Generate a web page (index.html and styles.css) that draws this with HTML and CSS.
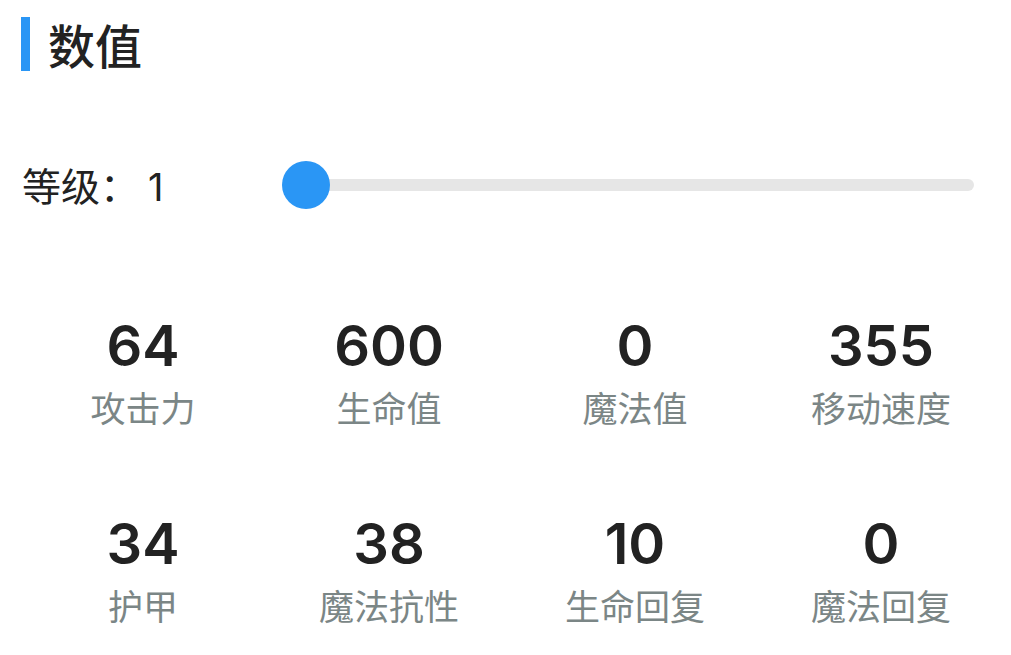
FILE: index.html
```html
<!DOCTYPE html>
<html lang="zh-CN">
<head>
<meta charset="utf-8">
<title>数值</title>
<link rel="stylesheet" href="styles.css">
</head>
<body>
<main class="page">
  <header class="section-head">
    <span class="section-bar"></span>
    <h1 class="section-title">数值</h1>
  </header>

  <div class="level-row">
    <div class="level-label">等级：<span class="level-num">1</span></div>
    <div class="slider">
      <div class="slider-track"></div>
      <div class="slider-thumb"></div>
    </div>
  </div>

  <section class="stats">
    <div class="stat"><div class="stat-value">64</div><div class="stat-name">攻击力</div></div>
    <div class="stat"><div class="stat-value">600</div><div class="stat-name">生命值</div></div>
    <div class="stat"><div class="stat-value">0</div><div class="stat-name">魔法值</div></div>
    <div class="stat"><div class="stat-value">355</div><div class="stat-name">移动速度</div></div>
    <div class="stat"><div class="stat-value">34</div><div class="stat-name">护甲</div></div>
    <div class="stat"><div class="stat-value">38</div><div class="stat-name">魔法抗性</div></div>
    <div class="stat"><div class="stat-value">10</div><div class="stat-name">生命回复</div></div>
    <div class="stat"><div class="stat-value">0</div><div class="stat-name">魔法回复</div></div>
  </section>
</main>
</body>
</html>
```

FILE: styles.css
```css
html, body {
  margin: 0;
  padding: 0;
  background: #ffffff;
}

body {
  font-family: "Inter", "Noto Sans CJK SC", sans-serif;
  color: #222222;
}

.page {
  width: 1011px;
  padding-top: 17px;
}

/* section heading with accent bar */
.section-head {
  display: flex;
  align-items: center;
  height: 54px;
  padding-left: 21px;
}

.section-bar {
  width: 9px;
  height: 54px;
  background: #2a96f5;
}

.section-title {
  margin: 0 0 0 18px;
  font-family: "Noto Sans CJK SC", sans-serif;
  font-size: 47px;
  font-weight: 500;
  line-height: 54px;
  color: #222222;
}

/* level slider */
.level-row {
  display: flex;
  align-items: center;
  height: 48px;
  margin-top: 90px;
  padding-left: 22px;
  padding-right: 37px;
}

.level-label {
  flex: 0 0 260px;
  font-family: "Noto Sans CJK SC", sans-serif;
  font-size: 39px;
  line-height: 48px;
  color: #222222;
}

.level-num {
  margin-left: 9px;
  font-family: "Inter", sans-serif;
  font-size: 38px;
}

.slider {
  position: relative;
  flex: 1;
  height: 48px;
  display: flex;
  align-items: center;
}

.slider-track {
  flex: 1;
  height: 12px;
  border-radius: 6px;
  background: #e6e6e6;
}

.slider-thumb {
  position: absolute;
  left: 0;
  top: 0;
  width: 48px;
  height: 48px;
  border-radius: 50%;
  background: #2a96f5;
}

/* stat grid */
.stats {
  display: grid;
  grid-template-columns: repeat(4, 246px);
  row-gap: 84px;
  margin-top: 105px;
  padding-left: 20px;
}

.stat {
  display: flex;
  flex-direction: column;
  align-items: center;
}

.stat-value {
  font-family: "Inter", sans-serif;
  font-size: 56px;
  font-weight: 600;
  line-height: 64px;
  color: #222222;
}

.stat-name {
  margin-top: 8px;
  font-family: "Noto Sans CJK SC", sans-serif;
  font-size: 35px;
  line-height: 42px;
  color: #7b8686;
}
```
